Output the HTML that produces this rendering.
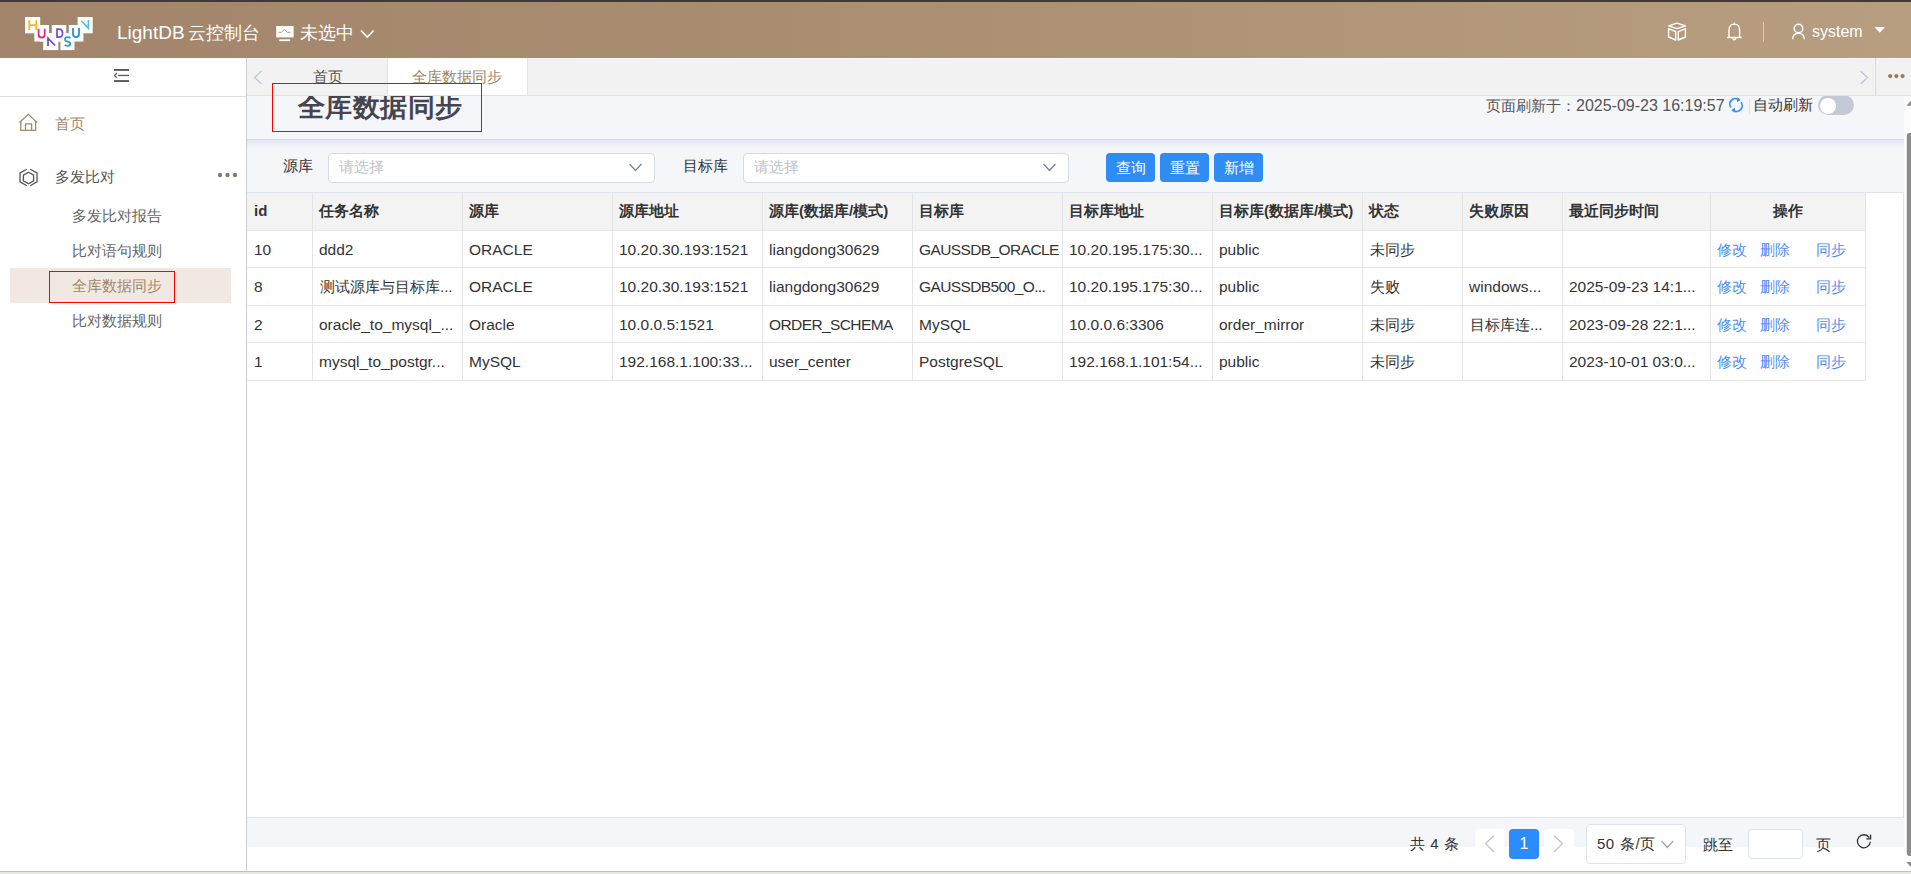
<!DOCTYPE html>
<html><head><meta charset="utf-8">
<style>
*{box-sizing:border-box;margin:0;padding:0}
html,body{width:1911px;height:874px;overflow:hidden;background:#fff;font-family:"Liberation Sans",sans-serif;color:#333}
.abs{position:absolute}
#topline{left:0;top:0;width:1911px;height:2px;background:#3b3b3b}
#header{left:0;top:2px;width:1911px;height:56px;background:linear-gradient(90deg,#a2856a 0%,#a98d71 40%,#b89e81 100%)}
.wt{color:#fff;white-space:nowrap}
#sidebar{left:0;top:58px;width:247px;height:813px;background:#fff;border-right:1px solid #cdcdcd}
#tabs{left:247px;top:58px;width:1664px;height:38px;background:#f2f2f2;border-bottom:1px solid #e2e2e2}
#main{left:247px;top:96px;width:1657px;height:775px;background:#f5f6f9}
#bottomline{left:0;top:871px;width:1911px;height:3px;background:#e8e8dd;border-top:1px solid #c2c2b4}
#scroll{left:1904px;top:96px;width:7px;height:775px;background:#fafafa}
.txt{white-space:nowrap;line-height:1}
table{border-collapse:collapse;table-layout:fixed}
.btn{width:49px;height:29px;border-radius:4px;background:#2f8cf2;color:#fff;font-size:15px;line-height:29px;text-align:center;white-space:nowrap}
.th{font-size:15px;line-height:18px;font-weight:bold;color:#333;white-space:nowrap}
.td{font-size:15px;line-height:18px;color:#333;white-space:nowrap;overflow:hidden}
.lk{color:#4f8ef2}
</style></head>
<body>
<div id="topline" class="abs"></div>
<div id="header" class="abs"></div>
<svg class="abs" style="left:0;top:0" width="100" height="58" viewBox="0 0 100 58">
 <g fill="#fff">
  <rect x="25" y="17" width="15.2" height="16.3"/>
  <rect x="34.3" y="25" width="14.7" height="16.5"/>
  <rect x="51.8" y="25" width="14.4" height="16.5"/>
  <rect x="68.8" y="25" width="14.6" height="16.5"/>
  <rect x="77.6" y="17" width="15.1" height="16.3"/>
  <rect x="43.2" y="33.3" width="15.1" height="16.8"/>
  <rect x="60.4" y="33.3" width="14.1" height="16.8"/>
  <rect x="40" y="33" width="30" height="8.5"/>
 </g>
 <g fill="none" stroke-width="1.75" stroke-linecap="butt">
  <path d="M29.3 20.2V29.9M36.2 20.2V29.9M29.3 25H36.2" stroke="#fdb515"/>
  <path d="M38.6 28.8V34.5Q38.6 37.5 41.6 37.5Q44.7 37.5 44.7 34.5V28.8" stroke="#e5247b"/>
  <path d="M48 46V38.2L55 45.5" stroke="#6b4fc6"/>
  <path d="M57 29V37.2H59Q62.6 37.2 62.6 33.1Q62.6 29 59 29Z" stroke="#7152c9"/>
  <path d="M70.3 38.3Q69.5 37.2 67.6 37.2Q65 37.2 65 39.3Q65 41.3 67.6 41.6Q70.3 42 70.3 44Q70.3 45.8 67.6 45.8Q65.6 45.8 64.8 44.8" stroke="#239be0"/>
  <path d="M73 28.1V34Q73 37 76 37Q79 37 79 34V28.1" stroke="#1d8fdc"/>
  <path d="M81.5 21L88.4 28.2V20" stroke="#4cc4ea"/>
 </g>
</svg>
<div class="abs txt wt" style="left:117px;top:22px;font-size:19px;line-height:22px">LightDB</div><div class="abs txt wt" style="left:188px;top:22px;font-size:18px;line-height:22px">云控制台</div>
<svg class="abs" style="left:276px;top:26px" width="19" height="16" viewBox="0 0 19 16">
 <rect x="0.2" y="0" width="17.4" height="11.4" fill="#fff"/>
 <path d="M2.7 6.3H5.3L8.6 3.4L11.3 6.3H14.6" stroke="#b3967a" stroke-width="1" fill="none"/>
 <rect x="3.2" y="13.3" width="10.9" height="1.8" fill="#fff"/>
</svg>
<div class="abs txt wt" style="left:300px;top:22px;font-size:18px;line-height:22px">未选中</div>
<svg class="abs" style="left:360px;top:29px" width="15" height="10" viewBox="0 0 15 10"><path d="M1 1.5L7.3 8L13.6 1.5" stroke="#fff" stroke-width="1.6" fill="none"/></svg>

<svg class="abs" style="left:1667px;top:22px" width="20" height="19" viewBox="0 0 20 19">
 <g fill="none" stroke="#fff" stroke-width="1.4" stroke-linejoin="round">
  <path d="M1.6 3.9L9.9 1.1L18.4 3.9L9.9 6.7Z"/>
  <path d="M1.6 6.6L8.7 9.6V18L1.6 15Z"/>
  <path d="M18.4 6.6L11.3 9.6V18L18.4 15Z"/>
 </g>
</svg>
<svg class="abs" style="left:1726px;top:22px" width="17" height="19" viewBox="0 0 17 19">
 <g fill="none" stroke="#fff" stroke-width="1.4">
  <path d="M3 15.3V8.2C3 4.4 5.2 2.1 8.3 2.1C11.4 2.1 13.6 4.4 13.6 8.2V15.3"/>
  <path d="M1 15.5H15.8"/>
  <path d="M8.3 0.6V2.2"/>
  <path d="M6.8 16.2A1.5 1.5 0 0 0 9.8 16.2"/>
 </g>
</svg>
<div class="abs" style="left:1763px;top:22px;width:1px;height:20px;background:rgba(255,255,255,0.45)"></div>
<svg class="abs" style="left:1791px;top:23px" width="16" height="17" viewBox="0 0 16 17">
 <g fill="none" stroke="#fff" stroke-width="1.5">
  <circle cx="7.5" cy="5.5" r="4.3"/>
  <path d="M1.6 16.2Q2 10.2 7.5 10.2Q13 10.2 13.4 16.2"/>
 </g>
</svg>
<div class="abs txt wt" style="left:1812px;top:21px;font-size:16px;line-height:22px">system</div>
<svg class="abs" style="left:1874px;top:26px" width="12" height="8" viewBox="0 0 12 8"><path d="M0.5 1H11L5.75 6.8Z" fill="#fff"/></svg>

<div id="sidebar" class="abs"></div>
<svg class="abs" style="left:112px;top:67px" width="20" height="17" viewBox="0 0 20 17">
 <g fill="#595959">
  <rect x="2" y="2" width="15" height="1.9"/>
  <rect x="6" y="7.8" width="11" height="1.3"/>
  <rect x="2" y="13.1" width="15" height="1.9"/>
 </g>
 <path d="M5 6L2.4 8.45L5 10.9" stroke="#595959" stroke-width="1.2" fill="none"/>
</svg>
<div class="abs" style="left:0;top:96px;width:246px;height:1px;background:#dedede"></div>
<svg class="abs" style="left:17px;top:112px" width="23" height="21" viewBox="0 0 23 21">
 <g fill="none" stroke="#a5886a" stroke-width="1.3">
  <path d="M2.4 10.6L11.4 2.3L20.2 10.6"/>
  <path d="M3.8 9.5V18.3H18.6V9.5"/>
  <path d="M8.5 18.3V11.8H14.6V18.3"/>
 </g>
</svg>
<div class="abs txt" style="left:55px;top:115px;font-size:15px;line-height:18px;color:#a3866a">首页</div>
<svg class="abs" style="left:17px;top:166px" width="23" height="23" viewBox="0 0 23 23">
 <g fill="none" stroke="#555" stroke-width="1.3">
  <path d="M11.5 6.2L16.6 9.1V14.9L11.5 17.8L6.4 14.9V9.1Z"/>
  <path d="M9.8 3.3L3 7V15.9L9.8 19.8M13.2 3.3L20 7V15.9L13.2 19.8"/>
 </g>
</svg>
<div class="abs txt" style="left:55px;top:168px;font-size:15px;line-height:18px;color:#555">多发比对</div>
<svg class="abs" style="left:217px;top:171px" width="22" height="8" viewBox="0 0 22 8"><g fill="#857a6c"><circle cx="3" cy="4" r="2.2"/><circle cx="10.5" cy="4" r="2.2"/><circle cx="18" cy="4" r="2.2"/></g></svg>
<div class="abs txt" style="left:72px;top:207px;font-size:15px;line-height:18px;color:#666">多发比对报告</div>
<div class="abs txt" style="left:72px;top:242px;font-size:15px;line-height:18px;color:#666">比对语句规则</div>
<div class="abs" style="left:10px;top:268px;width:221px;height:35px;background:#f1e9e1"></div>
<div class="abs txt" style="left:72px;top:277px;font-size:15px;line-height:18px;color:#a3866a">全库数据同步</div>
<div class="abs" style="left:49px;top:271px;width:126px;height:32px;border:1px solid #f00"></div>
<div class="abs txt" style="left:72px;top:312px;font-size:15px;line-height:18px;color:#666">比对数据规则</div>


<div id="main" class="abs"></div>
<div class="abs txt" style="left:298px;top:91px;font-size:27px;line-height:32px;font-weight:900;color:#45444f;letter-spacing:0.4px">全库数据同步</div>
<div class="abs txt" style="left:1486px;top:97px;font-size:15px;line-height:18px;color:#555">页面刷新于：</div><div class="abs txt" style="left:1576px;top:97px;font-size:16px;line-height:18px;color:#555">2025-09-23 16:19:57</div>
<svg class="abs" style="left:1728px;top:96px" width="16" height="18" viewBox="0 0 16 18">
 <g fill="none" stroke="#3d8ef0" stroke-width="1.8">
  <path d="M3 11.5A5.5 5.5 0 0 1 10.5 3.6"/>
  <path d="M13 6.5A5.5 5.5 0 0 1 5.5 14.4"/>
 </g>
 <path d="M9 1.2L12.8 3.9L9 6.3Z" fill="#3d8ef0"/>
 <path d="M7 16.8L3.2 14.1L7 11.7Z" fill="#3d8ef0"/>
</svg>
<div class="abs" style="left:1749px;top:98px;width:1px;height:16px;background:#e2e2e2"></div>
<div class="abs txt" style="left:1753px;top:96px;font-size:15px;line-height:18px;color:#333">自动刷新</div>
<div class="abs" style="left:1818px;top:95px;width:36px;height:20px;border-radius:10px;background:#c3cad6"></div>
<div class="abs" style="left:1820px;top:98px;width:15.5px;height:15.5px;border-radius:8px;background:#fff"></div>


<div class="abs" style="left:247px;top:139px;width:1657px;height:1px;background:#dadbdd"></div>
<div class="abs" style="left:247px;top:140px;width:1657px;height:9px;background:linear-gradient(180deg,#e2e7f2,#f5f6f9)"></div>
<div class="abs txt" style="left:283px;top:157px;font-size:15px;line-height:18px;color:#333">源库</div>
<div class="abs" style="left:328px;top:153px;width:327px;height:30px;border:1px solid #d6dbe3;border-radius:4px;background:#fff"></div>
<div class="abs txt" style="left:339px;top:158px;font-size:15px;line-height:18px;color:#c0c4cc">请选择</div>
<svg class="abs" style="left:628px;top:162px" width="15" height="10" viewBox="0 0 15 10"><path d="M1.5 2L7.5 8.5L13.5 2" stroke="#76818f" stroke-width="1.2" fill="none"/></svg>
<div class="abs txt" style="left:683px;top:157px;font-size:15px;line-height:18px;color:#333">目标库</div>
<div class="abs" style="left:743px;top:153px;width:326px;height:30px;border:1px solid #d6dbe3;border-radius:4px;background:#fff"></div>
<div class="abs txt" style="left:754px;top:158px;font-size:15px;line-height:18px;color:#c0c4cc">请选择</div>
<svg class="abs" style="left:1042px;top:162px" width="15" height="10" viewBox="0 0 15 10"><path d="M1.5 2L7.5 8.5L13.5 2" stroke="#76818f" stroke-width="1.2" fill="none"/></svg>
<div class="abs btn" style="left:1106px;top:153px">查询</div>
<div class="abs btn" style="left:1160px;top:153px">重置</div>
<div class="abs btn" style="left:1214px;top:153px">新增</div>
<!--TABLE--><div class="abs" style="left:247px;top:192px;width:1657px;height:626px;background:#fff;border:1px solid #dfe4ec;border-left:none"></div>
<div class="abs" style="left:247px;top:193px;width:1618px;height:37px;background:#f3f3f3"></div>
<div class="abs" style="left:247px;top:230px;width:1618px;height:1px;background:#e5e5e5"></div>
<div class="abs" style="left:247px;top:267px;width:1618px;height:1px;background:#e5e5e5"></div>
<div class="abs" style="left:247px;top:305px;width:1618px;height:1px;background:#e5e5e5"></div>
<div class="abs" style="left:247px;top:342px;width:1618px;height:1px;background:#e5e5e5"></div>
<div class="abs" style="left:247px;top:380px;width:1618px;height:1px;background:#e5e5e5"></div>
<div class="abs" style="left:312px;top:193px;width:1px;height:187px;background:#e5e5e5"></div>
<div class="abs" style="left:462px;top:193px;width:1px;height:187px;background:#e5e5e5"></div>
<div class="abs" style="left:612px;top:193px;width:1px;height:187px;background:#e5e5e5"></div>
<div class="abs" style="left:762px;top:193px;width:1px;height:187px;background:#e5e5e5"></div>
<div class="abs" style="left:912px;top:193px;width:1px;height:187px;background:#e5e5e5"></div>
<div class="abs" style="left:1062px;top:193px;width:1px;height:187px;background:#e5e5e5"></div>
<div class="abs" style="left:1212px;top:193px;width:1px;height:187px;background:#e5e5e5"></div>
<div class="abs" style="left:1362px;top:193px;width:1px;height:187px;background:#e5e5e5"></div>
<div class="abs" style="left:1462px;top:193px;width:1px;height:187px;background:#e5e5e5"></div>
<div class="abs" style="left:1562px;top:193px;width:1px;height:187px;background:#e5e5e5"></div>
<div class="abs" style="left:1710px;top:193px;width:1px;height:187px;background:#e5e5e5"></div>
<div class="abs" style="left:1865px;top:193px;width:1px;height:187px;background:#e5e5e5"></div>
<div class="abs th" style="left:254px;top:202px">id</div>
<div class="abs th" style="left:319px;top:202px">任务名称</div>
<div class="abs th" style="left:469px;top:202px">源库</div>
<div class="abs th" style="left:619px;top:202px">源库地址</div>
<div class="abs th" style="left:769px;top:202px">源库(数据库/模式)</div>
<div class="abs th" style="left:919px;top:202px">目标库</div>
<div class="abs th" style="left:1069px;top:202px">目标库地址</div>
<div class="abs th" style="left:1219px;top:202px">目标库(数据库/模式)</div>
<div class="abs th" style="left:1369px;top:202px">状态</div>
<div class="abs th" style="left:1469px;top:202px">失败原因</div>
<div class="abs th" style="left:1569px;top:202px">最近同步时间</div>
<div class="abs th" style="left:1710px;width:155px;top:202px;text-align:center">操作</div>
<div class="abs td" style="left:254px;top:241px;font-size:15.5px;max-width:56px">10</div>
<div class="abs td" style="left:319px;top:241px;font-size:15.5px;max-width:141px">ddd2</div>
<div class="abs td" style="left:469px;top:241px;font-size:15.5px;max-width:141px">ORACLE</div>
<div class="abs td" style="left:619px;top:241px;font-size:15.5px;max-width:141px">10.20.30.193:1521</div>
<div class="abs td" style="left:769px;top:241px;font-size:15.5px;max-width:141px">liangdong30629</div>
<div class="abs td" style="left:919px;top:241px;font-size:15.5px;max-width:141px;letter-spacing:-0.6px">GAUSSDB_ORACLE</div>
<div class="abs td" style="left:1069px;top:241px;font-size:15.5px;max-width:141px">10.20.195.175:30...</div>
<div class="abs td" style="left:1219px;top:241px;font-size:15.5px;max-width:141px">public</div>
<div class="abs td" style="left:1370px;top:241px;font-size:15px;max-width:91px">未同步</div>
<div class="abs td lk" style="left:1717px;top:241px">修改</div>
<div class="abs td lk" style="left:1760px;top:241px">删除</div>
<div class="abs td lk" style="left:1816px;top:241px">同步</div>
<div class="abs td" style="left:254px;top:278px;font-size:15.5px;max-width:56px">8</div>
<div class="abs td" style="left:320px;top:278px;font-size:15px;max-width:141px">测试源库与目标库...</div>
<div class="abs td" style="left:469px;top:278px;font-size:15.5px;max-width:141px">ORACLE</div>
<div class="abs td" style="left:619px;top:278px;font-size:15.5px;max-width:141px">10.20.30.193:1521</div>
<div class="abs td" style="left:769px;top:278px;font-size:15.5px;max-width:141px">liangdong30629</div>
<div class="abs td" style="left:919px;top:278px;font-size:15.5px;max-width:141px;letter-spacing:-0.6px">GAUSSDB500_O...</div>
<div class="abs td" style="left:1069px;top:278px;font-size:15.5px;max-width:141px">10.20.195.175:30...</div>
<div class="abs td" style="left:1219px;top:278px;font-size:15.5px;max-width:141px">public</div>
<div class="abs td" style="left:1370px;top:278px;font-size:15px;max-width:91px">失败</div>
<div class="abs td" style="left:1469px;top:278px;font-size:15.5px;max-width:91px">windows...</div>
<div class="abs td" style="left:1569px;top:278px;font-size:15.5px;max-width:139px">2025-09-23 14:1...</div>
<div class="abs td lk" style="left:1717px;top:278px">修改</div>
<div class="abs td lk" style="left:1760px;top:278px">删除</div>
<div class="abs td lk" style="left:1816px;top:278px">同步</div>
<div class="abs td" style="left:254px;top:316px;font-size:15.5px;max-width:56px">2</div>
<div class="abs td" style="left:319px;top:316px;font-size:15.5px;max-width:141px">oracle_to_mysql_...</div>
<div class="abs td" style="left:469px;top:316px;font-size:15.5px;max-width:141px">Oracle</div>
<div class="abs td" style="left:619px;top:316px;font-size:15.5px;max-width:141px">10.0.0.5:1521</div>
<div class="abs td" style="left:769px;top:316px;font-size:15.5px;max-width:141px;letter-spacing:-0.6px">ORDER_SCHEMA</div>
<div class="abs td" style="left:919px;top:316px;font-size:15.5px;max-width:141px">MySQL</div>
<div class="abs td" style="left:1069px;top:316px;font-size:15.5px;max-width:141px">10.0.0.6:3306</div>
<div class="abs td" style="left:1219px;top:316px;font-size:15.5px;max-width:141px">order_mirror</div>
<div class="abs td" style="left:1370px;top:316px;font-size:15px;max-width:91px">未同步</div>
<div class="abs td" style="left:1470px;top:316px;font-size:15px;max-width:91px">目标库连...</div>
<div class="abs td" style="left:1569px;top:316px;font-size:15.5px;max-width:139px">2023-09-28 22:1...</div>
<div class="abs td lk" style="left:1717px;top:316px">修改</div>
<div class="abs td lk" style="left:1760px;top:316px">删除</div>
<div class="abs td lk" style="left:1816px;top:316px">同步</div>
<div class="abs td" style="left:254px;top:353px;font-size:15.5px;max-width:56px">1</div>
<div class="abs td" style="left:319px;top:353px;font-size:15.5px;max-width:141px">mysql_to_postgr...</div>
<div class="abs td" style="left:469px;top:353px;font-size:15.5px;max-width:141px">MySQL</div>
<div class="abs td" style="left:619px;top:353px;font-size:15.5px;max-width:141px">192.168.1.100:33...</div>
<div class="abs td" style="left:769px;top:353px;font-size:15.5px;max-width:141px">user_center</div>
<div class="abs td" style="left:919px;top:353px;font-size:15.5px;max-width:141px">PostgreSQL</div>
<div class="abs td" style="left:1069px;top:353px;font-size:15.5px;max-width:141px">192.168.1.101:54...</div>
<div class="abs td" style="left:1219px;top:353px;font-size:15.5px;max-width:141px">public</div>
<div class="abs td" style="left:1370px;top:353px;font-size:15px;max-width:91px">未同步</div>
<div class="abs td" style="left:1569px;top:353px;font-size:15.5px;max-width:139px">2023-10-01 03:0...</div>
<div class="abs td lk" style="left:1717px;top:353px">修改</div>
<div class="abs td lk" style="left:1760px;top:353px">删除</div>
<div class="abs td lk" style="left:1816px;top:353px">同步</div><!--/TABLE-->
<div id="tabs" class="abs"></div>
<div class="abs" style="left:247px;top:58px;width:1664px;height:1px;background:#f8f8f8"></div>
<svg class="abs" style="left:252px;top:69px" width="12" height="17" viewBox="0 0 12 17"><path d="M9.5 2L2.5 8.5L9.5 15" stroke="#b9c6d6" stroke-width="1.2" fill="none"/></svg>
<div class="abs txt" style="left:313px;top:68px;font-size:15px;line-height:18px;color:#555">首页</div>
<div class="abs" style="left:387px;top:58px;width:141px;height:37px;background:#fff;border-left:1px solid #e4e4e4;border-right:1px solid #e4e4e4"></div>
<div class="abs txt" style="left:412px;top:68px;font-size:15px;line-height:18px;color:#a3866a">全库数据同步</div>
<svg class="abs" style="left:1858px;top:69px" width="12" height="17" viewBox="0 0 12 17"><path d="M2.5 2L9.5 8.5L2.5 15" stroke="#b9c6d6" stroke-width="1.2" fill="none"/></svg>
<div class="abs" style="left:1875px;top:58px;width:1px;height:37px;background:#dcdcdc"></div>
<svg class="abs" style="left:1886px;top:72px" width="21" height="8" viewBox="0 0 21 8"><g fill="#9a7b57"><circle cx="4.2" cy="4.1" r="2.1"/><circle cx="10.4" cy="4.1" r="2.1"/><circle cx="16.6" cy="4.1" r="2.1"/></g></svg>
<div class="abs" style="left:272px;top:83px;width:210px;height:49px;border:1px solid #f00;z-index:5"></div>
<!--PAG-->
<div class="abs" style="left:247px;top:847px;width:1657px;height:24px;background:#fff"></div>
<div class="abs txt" style="left:1410px;top:835px;font-size:15px;line-height:18px;color:#333;word-spacing:1px">共 4 条</div>
<div class="abs" style="left:1475px;top:829px;width:30px;height:30px;border-radius:4px;background:#fff"></div>
<svg class="abs" style="left:1482px;top:834px" width="15" height="20" viewBox="0 0 15 20"><path d="M12 1.5L3.5 9.8L12 18" stroke="#c3c6cd" stroke-width="1.4" fill="none"/></svg>
<div class="abs" style="left:1509px;top:829px;width:30px;height:30px;border-radius:4px;background:#2d8cfd;color:#fff;font-size:16px;line-height:30px;text-align:center">1</div>
<div class="abs" style="left:1544px;top:829px;width:30px;height:30px;border-radius:4px;background:#fff"></div>
<svg class="abs" style="left:1551px;top:834px" width="15" height="20" viewBox="0 0 15 20"><path d="M3 1.5L11.5 9.8L3 18" stroke="#c3c6cd" stroke-width="1.4" fill="none"/></svg>
<div class="abs" style="left:1586px;top:824px;width:100px;height:40px;border:1px solid #dfe3ea;border-radius:4px;background:#fff"></div>
<div class="abs txt" style="left:1597px;top:835px;font-size:15px;line-height:18px;color:#333;word-spacing:1.5px;letter-spacing:0.3px">50 条/页</div>
<svg class="abs" style="left:1660px;top:839px" width="15" height="11" viewBox="0 0 15 11"><path d="M1.5 2L7.3 8.5L13.2 2" stroke="#9aa3b0" stroke-width="1.2" fill="none"/></svg>
<div class="abs txt" style="left:1703px;top:836px;font-size:15px;line-height:18px;color:#333">跳至</div>
<div class="abs" style="left:1748px;top:829px;width:55px;height:30px;border:1px solid #dfe3ea;border-radius:4px;background:#fff"></div>
<div class="abs txt" style="left:1816px;top:836px;font-size:15px;line-height:18px;color:#333">页</div>
<svg class="abs" style="left:1855px;top:833px" width="18" height="17" viewBox="0 0 18 17">
 <path d="M14.3 4.6A6.5 6.5 0 1 0 15.4 8.8" stroke="#333" stroke-width="1.3" fill="none"/>
 <path d="M15.6 1.6V5.9H11.3" stroke="#333" stroke-width="1.3" fill="none"/>
</svg>
<svg class="abs" style="left:1904px;top:96px" width="7" height="775" viewBox="0 0 7 775">
 <rect x="0" y="0" width="7" height="775" fill="#fcfcfc"/>
 <path d="M2.3 9.8L8 3.8L13 9.8Z" fill="#8b8b8b"/>
 <rect x="2.8" y="37" width="10" height="723" rx="3" fill="#8b8b8b"/>
 <path d="M2.3 766L8 772L13 766Z" fill="#8b8b8b"/>
</svg>
<!--/PAG-->
<div id="bottomline" class="abs"></div>
</body></html>
